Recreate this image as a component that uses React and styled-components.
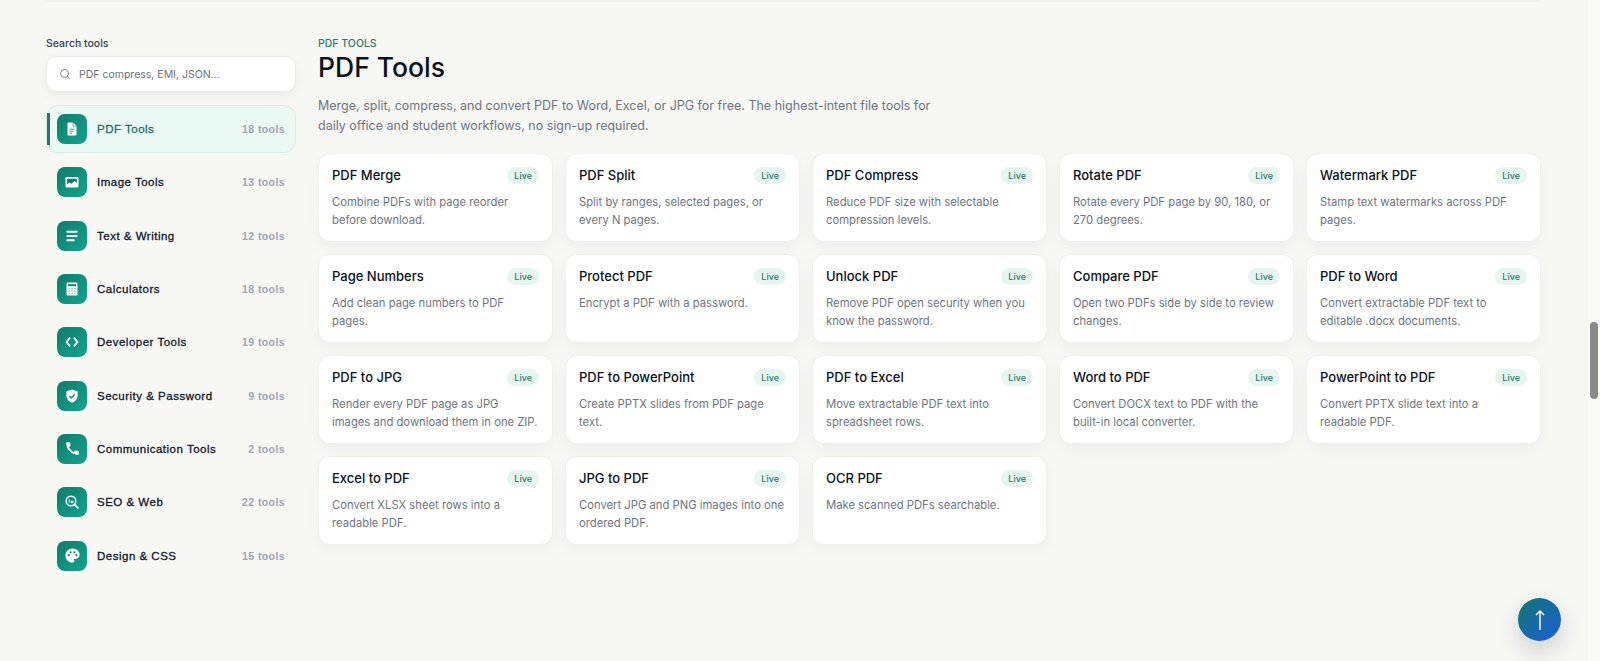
import styled, { createGlobalStyle } from 'styled-components';
import { MdCall, MdPalette } from 'react-icons/md';
import { Search } from 'lucide-react';

const GlobalStyle = createGlobalStyle`
  html, body {
    margin: 0;
    height: 100%;
    overflow: hidden;
    background: #f7f7f4;
    font-family: Inter, "Liberation Sans", sans-serif;
  }
`;

const Page = styled.div`
  width: 1588px;
  height: 661px;
  box-sizing: border-box;
  padding: 0 47px 0 46px;
`;

const TopRule = styled.div`
  height: 2px;
  background: #efefeb;
  border-radius: 0 0 2px 2px;
`;

const Layout = styled.div`
  display: grid;
  grid-template-columns: 250px 1fr;
  column-gap: 22px;
  padding-top: 35px;
`;

const Sidebar = styled.aside`
  display: flex;
  flex-direction: column;
`;

const SearchLabel = styled.label`
  font-size: 10.5px;
  line-height: 13px;
  font-weight: 500;
  color: #374151;
  margin-bottom: 6px;
`;

const SearchBox = styled.div`
  display: flex;
  align-items: center;
  gap: 8px;
  height: 36px;
  box-sizing: border-box;
  padding-left: 12px;
  background: #fff;
  border: 1px solid #e9e9e6;
  border-radius: 10px;
  box-shadow: 0 4px 12px rgba(15, 23, 42, 0.05);
  color: #6b7280;
  font-size: 10.5px;
  margin-bottom: 13px;
`;

const CategoryList = styled.nav`
  display: flex;
  flex-direction: column;
  gap: 5.33px;
`;

const Category = styled.div`
  position: relative;
  display: flex;
  align-items: center;
  height: 48px;
  box-sizing: border-box;
  padding: 0 10px;
  border: 1px solid ${(p) => (p.$active ? '#d5efe8' : 'transparent')};
  border-radius: 12px;
  background: ${(p) => (p.$active ? '#ebf9f5' : 'transparent')};
  color: ${(p) => (p.$active ? '#1f6f62' : '#0f172a')};
`;

const ActiveBar = styled.span`
  position: absolute;
  left: 0;
  top: 7px;
  bottom: 7px;
  width: 3px;
  background: #2b7466;
`;

const IconTile = styled.span`
  flex: none;
  display: flex;
  align-items: center;
  justify-content: center;
  width: 30px;
  height: 30px;
  border-radius: 8px;
  background: linear-gradient(135deg, #117a6b, #14a48f);
  color: #fff;
`;

const CategoryName = styled.span`
  flex: 1;
  margin-left: 10px;
  font-family: "Liberation Sans", Arial, sans-serif;
  font-size: 11.5px;
  font-weight: 400;
  letter-spacing: 0.5px;
  -webkit-text-stroke: 0.3px currentColor;
`;

const CategoryCount = styled.span`
  font-family: "Liberation Sans", Arial, sans-serif;
  font-size: 10.5px;
  font-weight: 700;
  letter-spacing: 0.4px;
  color: #a0a4b4;
`;

const Main = styled.main`
  min-width: 0;
`;

const Eyebrow = styled.div`
  font-size: 10.5px;
  line-height: 13px;
  font-weight: 500;
  color: #2f7a6c;
`;

const Title = styled.h1`
  margin: 1px 0 0;
  font-size: 26.5px;
  line-height: 32px;
  font-weight: 500;
  color: #0b1220;
`;

const Intro = styled.p`
  margin: 13px 0 0;
  max-width: 620px;
  font-size: 12.5px;
  line-height: 20px;
  color: #6f7682;
`;

const CardGrid = styled.div`
  display: grid;
  grid-template-columns: repeat(5, 1fr);
  gap: 12px;
  margin-top: 17px;
`;

const Card = styled.article`
  height: 89px;
  box-sizing: border-box;
  padding: 12px 13px;
  background: #fff;
  border: 1px solid #efefec;
  border-radius: 12px;
  box-shadow: 0 6px 16px rgba(15, 23, 42, 0.04);
`;

const CardHead = styled.div`
  display: flex;
  align-items: center;
  justify-content: space-between;
  height: 18px;
`;

const CardTitle = styled.h3`
  margin: 0;
  font-size: 13px;
  font-weight: 500;
  color: #0b1220;
`;

const LiveBadge = styled.span`
  padding: 2px 7px;
  border-radius: 999px;
  background: #e6f5f0;
  color: #2f7a6c;
  font-size: 9px;
  line-height: 13px;
  font-weight: 500;
`;

const CardText = styled.p`
  margin: 10px 0 0;
  font-size: 11.25px;
  line-height: 17.5px;
  color: #6f7682;
`;

const ScrollTop = styled.button`
  position: fixed;
  left: 1518px;
  top: 598px;
  width: 43px;
  height: 43px;
  padding: 0;
  display: flex;
  align-items: center;
  justify-content: center;
  border: 0;
  border-radius: 50%;
  background: linear-gradient(135deg, #0f766e, #1d5fd8);
  box-shadow: 0 10px 24px rgba(15, 23, 42, 0.18);
`;

const ScrollTrack = styled.div`
  position: fixed;
  right: 0;
  top: 0;
  bottom: 0;
  width: 12px;
  background: #f9f9f7;
`;

const ScrollThumb = styled.div`
  position: absolute;
  left: 2px;
  top: 322px;
  width: 8px;
  height: 77px;
  border-radius: 4px;
  background: #8a8a8a;
`;

const TEAL = '#14897a';

const Glyph = ({ children }) => (
  <svg width="16" height="16" viewBox="0 0 16 16" fill="none">
    {children}
  </svg>
);

const PdfIcon = () => (
  <Glyph>
    <path d="M3.5 2.5a1 1 0 0 1 1-1h4.6l3.4 3.4v8.6a1 1 0 0 1-1 1h-7a1 1 0 0 1-1-1z" fill="#fff" />
    <path d="M9 1.5v3.6h3.5" stroke={TEAL} strokeWidth=".7" />
    <path d="M5.5 8.2h5M5.5 10.2h4M5.5 12.2h2.6" stroke={TEAL} strokeWidth=".8" />
  </Glyph>
);

const ImageIcon = () => (
  <Glyph>
    <rect x="1.5" y="3" width="13" height="10.5" rx="1.2" fill="#fff" />
    <path d="M3.2 4.8h9.6v4.1L10.6 7 7.4 9.8 5.6 8.4 3.2 10.2z" fill="#0f766a" />
  </Glyph>
);

const TextIcon = () => (
  <Glyph>
    <path d="M3.4 3.8h9.2M3.4 8h9.2M3.4 12.2h6.4" stroke="#fff" strokeWidth="2.1" strokeLinecap="round" />
  </Glyph>
);

const CalculatorIcon = () => (
  <Glyph>
    <rect x="2.5" y="1.5" width="11" height="13" rx="1.3" fill="#fff" />
    <path d="M4 3.2h8v2H4z" fill={TEAL} />
    <path
      d="M4.4 7h1.6v1.4H4.4zM7.2 7h1.6v1.4H7.2zM10 7h1.6v1.4H10zM4.4 9.4h1.6v1.4H4.4zM7.2 9.4h1.6v1.4H7.2zM10 9.4h1.6v1.4H10zM4.4 11.7h1.6v1.4H4.4zM7.2 11.7h1.6v1.4H7.2zM10 11.7h1.6v1.4H10z"
      fill="#8fcfc5"
    />
  </Glyph>
);

const CodeIcon = () => (
  <Glyph>
    <path d="M6 3.6 2.6 8 6 12.4M10 3.6 13.4 8 10 12.4" stroke="#fff" strokeWidth="1.8" />
  </Glyph>
);

const ShieldIcon = () => (
  <Glyph>
    <path d="M8 1.4 13.6 3.5v4.2c0 3.3-2.3 5.8-5.6 6.9-3.3-1.1-5.6-3.6-5.6-6.9V3.5z" fill="#fff" />
    <path d="M5.4 8.1 7.3 10l3.4-3.6" stroke={TEAL} strokeWidth="1.4" />
  </Glyph>
);

const PhoneIcon = () => <MdCall size={17} />;

const SeoIcon = () => (
  <Glyph>
    <circle cx="7" cy="7" r="4.8" stroke="#fff" strokeWidth="1.5" />
    <path d="M10.6 10.6 14 14" stroke="#fff" strokeWidth="1.7" strokeLinecap="round" />
    <path d="M5.2 5.4v3.2M7.2 7.2h1.8v1.4H7.2z" stroke="#fff" strokeWidth="1" />
  </Glyph>
);

const PaletteIcon = () => <MdPalette size={17} />;

const categories = [
  { name: 'PDF Tools', count: 18, Icon: PdfIcon, active: true },
  { name: 'Image Tools', count: 13, Icon: ImageIcon },
  { name: 'Text & Writing', count: 12, Icon: TextIcon },
  { name: 'Calculators', count: 18, Icon: CalculatorIcon },
  { name: 'Developer Tools', count: 19, Icon: CodeIcon },
  { name: 'Security & Password', count: 9, Icon: ShieldIcon },
  { name: 'Communication Tools', count: 2, Icon: PhoneIcon },
  { name: 'SEO & Web', count: 22, Icon: SeoIcon },
  { name: 'Design & CSS', count: 15, Icon: PaletteIcon },
];

const tools = [
  ['PDF Merge', 'Combine PDFs with page reorder before download.'],
  ['PDF Split', 'Split by ranges, selected pages, or every N pages.'],
  ['PDF Compress', 'Reduce PDF size with selectable compression levels.'],
  ['Rotate PDF', 'Rotate every PDF page by 90, 180, or 270 degrees.'],
  ['Watermark PDF', 'Stamp text watermarks across PDF pages.'],
  ['Page Numbers', 'Add clean page numbers to PDF pages.'],
  ['Protect PDF', 'Encrypt a PDF with a password.'],
  ['Unlock PDF', 'Remove PDF open security when you know the password.'],
  ['Compare PDF', 'Open two PDFs side by side to review changes.'],
  ['PDF to Word', 'Convert extractable PDF text to editable .docx documents.'],
  ['PDF to JPG', 'Render every PDF page as JPG images and download them in one ZIP.'],
  ['PDF to PowerPoint', 'Create PPTX slides from PDF page text.'],
  ['PDF to Excel', 'Move extractable PDF text into spreadsheet rows.'],
  ['Word to PDF', 'Convert DOCX text to PDF with the built-in local converter.'],
  ['PowerPoint to PDF', 'Convert PPTX slide text into a readable PDF.'],
  ['Excel to PDF', 'Convert XLSX sheet rows into a readable PDF.'],
  ['JPG to PDF', 'Convert JPG and PNG images into one ordered PDF.'],
  ['OCR PDF', 'Make scanned PDFs searchable.'],
];

const App = () => {
  return (
    <Page>
      <GlobalStyle />
      <TopRule />
      <Layout>
        <Sidebar>
          <SearchLabel>Search tools</SearchLabel>
          <SearchBox>
            <Search size={12} strokeWidth={1.8} />
            PDF compress, EMI, JSON...
          </SearchBox>
          <CategoryList>
            {categories.map(({ name, count, Icon, active }) => (
              <Category key={name} $active={active}>
                {active && <ActiveBar />}
                <IconTile>
                  <Icon />
                </IconTile>
                <CategoryName>{name}</CategoryName>
                <CategoryCount>{count} tools</CategoryCount>
              </Category>
            ))}
          </CategoryList>
        </Sidebar>
        <Main>
          <Eyebrow>PDF TOOLS</Eyebrow>
          <Title>PDF Tools</Title>
          <Intro>
            Merge, split, compress, and convert PDF to Word, Excel, or JPG for free. The
            highest-intent file tools for daily office and student workflows, no sign-up required.
          </Intro>
          <CardGrid>
            {tools.map(([title, text]) => (
              <Card key={title}>
                <CardHead>
                  <CardTitle>{title}</CardTitle>
                  <LiveBadge>Live</LiveBadge>
                </CardHead>
                <CardText>{text}</CardText>
              </Card>
            ))}
          </CardGrid>
        </Main>
      </Layout>
      <ScrollTop aria-label="Back to top">
        <svg width="14" height="22" viewBox="0 0 14 22" fill="none" stroke="#fff" strokeWidth="1.4">
          <path d="M7 21V2M3 6l4-4 4 4" />
        </svg>
      </ScrollTop>
      <ScrollTrack>
        <ScrollThumb />
      </ScrollTrack>
    </Page>
  );
};

export default App;
